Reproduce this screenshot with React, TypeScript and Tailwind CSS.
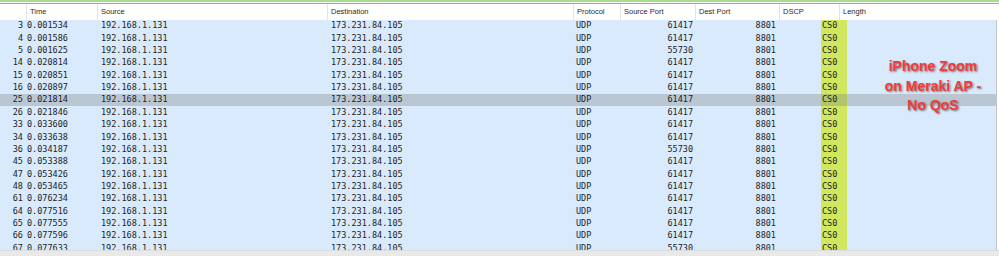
const ROWS: { no: number; time: string; sport: string; sel?: boolean }[] = [
  { no: 3, time: "0.001534", sport: "61417" },
  { no: 4, time: "0.001586", sport: "61417" },
  { no: 5, time: "0.001625", sport: "55730" },
  { no: 14, time: "0.020814", sport: "61417" },
  { no: 15, time: "0.020851", sport: "61417" },
  { no: 16, time: "0.020897", sport: "61417" },
  { no: 25, time: "0.021814", sport: "61417", sel: true },
  { no: 26, time: "0.021846", sport: "61417" },
  { no: 33, time: "0.033600", sport: "61417" },
  { no: 34, time: "0.033638", sport: "61417" },
  { no: 36, time: "0.034187", sport: "55730" },
  { no: 45, time: "0.053388", sport: "61417" },
  { no: 47, time: "0.053426", sport: "61417" },
  { no: 48, time: "0.053465", sport: "61417" },
  { no: 61, time: "0.076234", sport: "61417" },
  { no: 64, time: "0.077516", sport: "61417" },
  { no: 65, time: "0.077555", sport: "61417" },
  { no: 66, time: "0.077596", sport: "61417" },
  { no: 67, time: "0.077633", sport: "55730" },
];

const HEAD: { label: string; w: string }[] = [
  { label: "Time", w: "w-[71px]" },
  { label: "Source", w: "w-[230px]" },
  { label: "Destination", w: "w-[246px]" },
  { label: "Protocol", w: "w-[47px]" },
  { label: "Source Port", w: "w-[75px]" },
  { label: "Dest Port", w: "w-[84px]" },
  { label: "DSCP", w: "w-[60px]" },
  { label: "Length", w: "flex-1" },
];

export default function App() {
  return (
    <div className="relative w-[999px] h-[256px] overflow-hidden bg-white flex flex-col">
      <div className="h-[2px] bg-[#a8dd8c]" />
      <div className="h-[1px] bg-white" />
      <div className="h-[1px] bg-[#a3a3a3]" />

      {/* header */}
      <div className="h-[15.5px] flex items-stretch text-[7.5px] text-[#2a2a2a] font-['Liberation_Sans',Arial,sans-serif] w-[997px]">
        <div className="w-[26px]" />
        {HEAD.map((h) => (
          <div key={h.label} className={`${h.w} border-l border-[#e2e2e2] pl-[3px] flex items-center`}>
            {h.label}
          </div>
        ))}
      </div>

      {/* packets */}
      <div className="flex-1 overflow-hidden bg-[#d9eafc] w-[997px] border-r border-[#c4c4c4] text-[8.5px] text-[#1e1e1e] font-['DejaVu_Sans_Mono','Liberation_Mono',monospace]">
        {ROWS.map((r) => (
          <div
            key={r.no}
            className={`h-[12.37px] flex items-center whitespace-nowrap ${r.sel ? "bg-[#bac7d3]" : ""}`}
          >
            <span className="w-[26px] text-right pr-[3px]">{r.no}</span>
            <span className="w-[71px] pl-[1px]">{r.time}</span>
            <span className="w-[230px] pl-[4px]">192.168.1.131</span>
            <span className="w-[246px] pl-[4px]">173.231.84.105</span>
            <span className="w-[47px] pl-[3px]">UDP</span>
            <span className="w-[75px] text-right pr-[2px]">{r.sport}</span>
            <span className="w-[84px] text-right pr-[3px]">8801</span>
            <span className="w-[42px]" />
            <span
              className={`w-[26px] h-full flex items-center pl-[1px] ${r.sel ? "bg-[#b4c569]" : "bg-[#d0e75e]"}`}
            >
              CS0
            </span>
            <span className="flex-1" />
          </div>
        ))}
      </div>

      {/* horizontal scrollbar */}
      <div className="h-[6px] bg-[#e9e9e9] border-t border-[#dcdcdc]" />

      <div className="absolute left-[878px] top-[57px] w-[110px] text-center text-[14px] leading-[19.5px] font-bold text-[#f23b3b] font-['Liberation_Sans',Arial,sans-serif] [text-shadow:1px_1px_2px_rgba(60,60,60,0.7)]">
        iPhone Zoom
        <br />
        on Meraki AP -
        <br />
        No QoS
      </div>
    </div>
  );
}
